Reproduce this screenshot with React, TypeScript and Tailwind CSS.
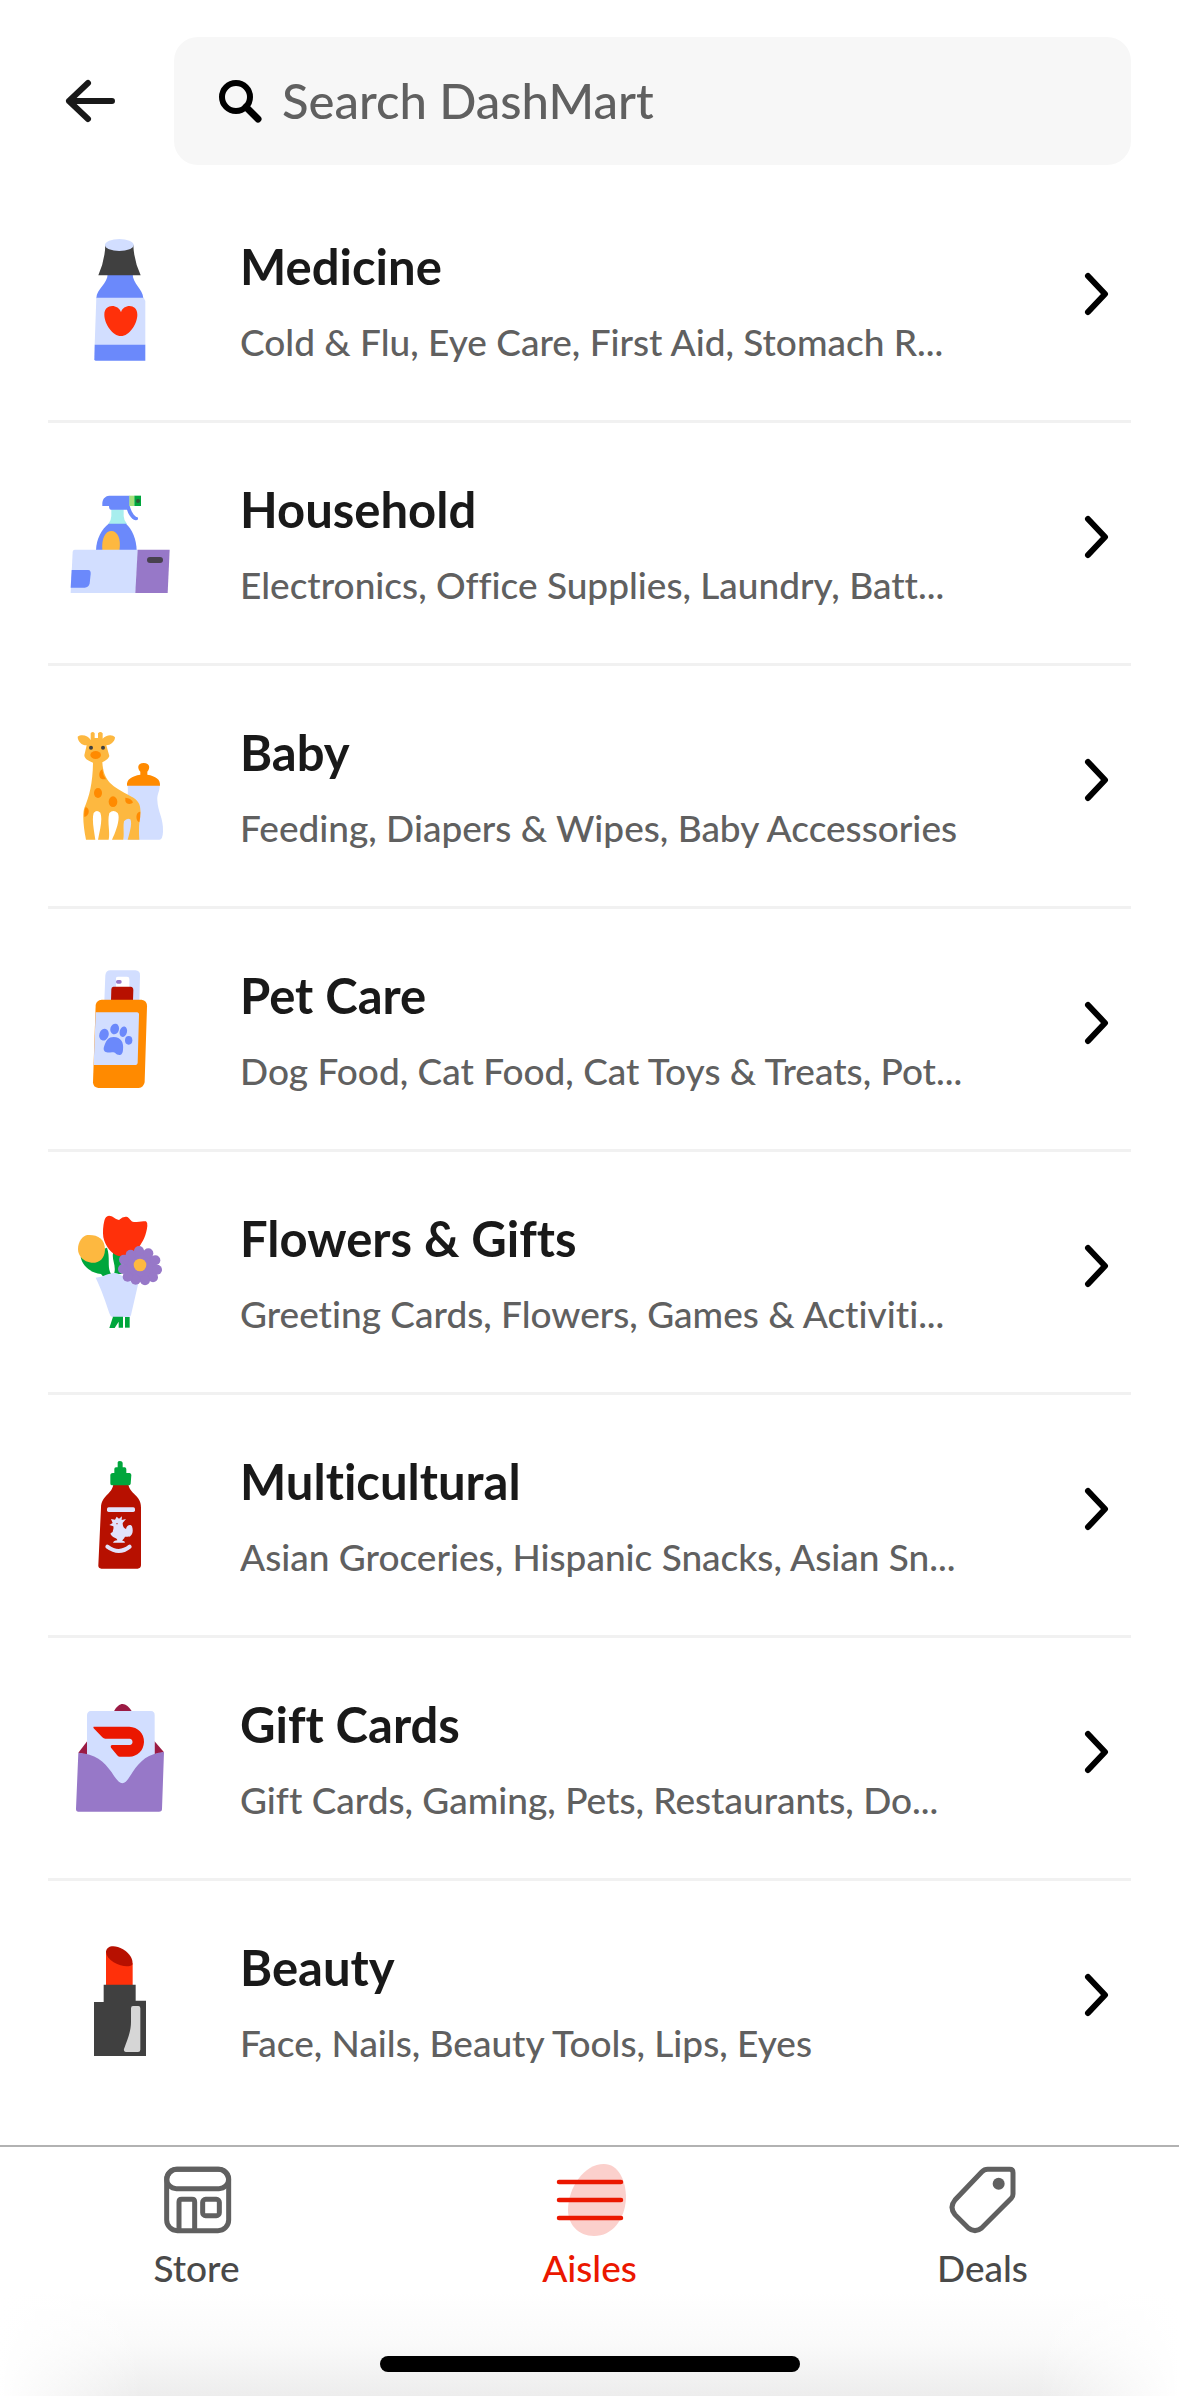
import type { ReactNode } from "react";

type Aisle = {
  name: string;
  description: string;
  // top of the artwork's view box
  top: number;
  art: ReactNode;
};

const MedicineArt = () => (
  <>
    <path d="M173 162 H248 C248 192 278 205 280 235 H139 C140 205 173 192 173 162Z" fill="#6b89fb" />
    <path d="M139 233 H281 L286 243 V375 H134Z" fill="#d2deff" />
    <path d="M134 374 H286 V422 H137 Q133 422 133 418Z" fill="#6b89fb" />
    <path d="M166 74 H250 Q251 120 272 166 H145 Q165 120 166 74Z" fill="#404040" />
    <ellipse cx="208" cy="75" rx="43" ry="18" fill="#d2deff" />
    <path
      d="M213 277 C205 252 163 250 163 284 C163 311 188 348 213 348 C238 348 262 311 262 284 C262 250 220 252 213 277Z"
      fill="#ff300a"
    />
  </>
);

const HouseholdArt = () => (
  <>
    <path d="M184 118 H221 V138 Q221 150 231 162 H175 Q184 150 184 138Z" fill="#a8eeee" />
    <path d="M176 161 H228 C246 178 259 205 260 241 H138 C139 205 155 178 176 161Z" fill="#6b89fb" />
    <path d="M157 241 C154 205 166 183 184 183 C203 183 214 207 208 241Z" fill="#fdb840" />
    <path
      d="M178 77 H239 V107 C244 125 252 139 263 142 Q267 151 257 151 C242 147 234 129 231 119 H183 Q177 119 177 108 H157 C156 88 163 79 178 77Z"
      fill="#6b89fb"
    />
    <path d="M238 77 H253 V108 H238Z" fill="#a3e07a" />
    <path d="M253 77 H273 V108 H253Z" fill="#00a63c" />
    <circle cx="264" cy="93" r="6" fill="#2c5a37" />
    <path d="M74 239 H264 L257 369 H62 L68 245 Q69 239 74 239Z" fill="#d2deff" />
    <path d="M263 239 H359 L353 369 H256Z" fill="#9778c8" />
    <path d="M65 300 H115 Q123 301 122 312 L119 340 Q116 353 104 353 H62Z" fill="#6b89fb" />
    <rect x="291" y="261" width="48" height="18" rx="9" fill="#48414f" />
  </>
);

const BabyArt = () => (
  <>
    <path
      d="M233 224 H329 C330 245 321 250 322 271 C323 305 341 325 339 365 Q338 389 328 389 H220 V300 C236 275 234 250 233 224Z"
      fill="#d2deff"
    />
    <path
      d="M231 227 C229 208 245 198 271 194 V185 C262 176 261 159 281 159 C301 159 301 176 292 185 V194 C317 198 332 208 330 227Z"
      fill="#ff8a00"
    />
    <path
      d="M122 70 Q128 62 134 70 V84 H144 V70 Q151 62 158 70 V86 C168 74 188 72 195 82 C195 96 180 106 169 106 L178 138 C176 147 164 153 157 157 C160 210 185 226 210 241 C247 264 275 266 271 310 C269 335 265 350 268 389 H233 C240 365 247 340 241 328 Q231 322 222 334 C219 352 223 370 220 389 H186 C198 365 212 325 203 309 Q190 297 178 309 C171 335 181 365 176 389 H144 C151 355 158 327 151 308 Q140 298 131 309 C125 330 132 360 136 389 H108 C100 350 97 312 103 294 C118 258 128 220 129 158 C116 153 104 148 103 136 L110 106 C95 106 83 94 83 80 C94 72 115 76 122 90Z"
      fill="#fdb840"
    />
    <ellipse cx="137" cy="135" rx="16" ry="12" fill="#ff8a00" />
    <circle cx="123" cy="113" r="6" fill="#404040" />
    <circle cx="159" cy="113" r="6" fill="#404040" />
    <path d="M157 178 C144 185 145 207 158 208 H168 Q158 195 157 178Z" fill="#ff8a00" />
    <ellipse cx="144" cy="249" rx="12" ry="15" fill="#ff8a00" />
    <ellipse cx="189" cy="275" rx="13" ry="16" fill="#ff8a00" />
    <path d="M226 263 Q243 264 249 277 C244 284 228 284 226 273Z" fill="#ff8a00" />
    <path d="M107 291 C120 294 120 317 103 321 Q101 302 107 291Z" fill="#ff8a00" />
    <path d="M271 305 C257 303 255 333 268 337 Q272 321 271 305Z" fill="#ff8a00" />
  </>
);

const PetCareArt = () => (
  <>
    <path d="M181 61 H256 Q271 62 270 77 L268 153 H163 L166 76 Q168 61 181 61Z" fill="#d2deff" />
    <path d="M198 83 Q199 80 204 80 H231 Q238 80 238 87 V111 H198Z" fill="#fff" />
    <rect x="198" y="90" width="17" height="11" rx="5" fill="#9778c8" />
    <path d="M190 110 H242 Q250 111 250 120 L249 152 H183 L184 118 Q184 110 190 110Z" fill="#b71000" />
    <path
      d="M155 149 H275 Q291 151 291 169 L284 396 Q281 413 266 414 H145 Q129 412 129 397 L137 165 Q139 151 155 149Z"
      fill="#ff8a00"
    />
    <path d="M137 187 H262 Q268 188 267 195 L263 339 Q262 345 257 345 H131Z" fill="#d2deff" />
    <ellipse cx="162" cy="254" rx="14" ry="18" transform="rotate(18 162 254)" fill="#6b89fb" />
    <ellipse cx="194" cy="237" rx="13" ry="16" transform="rotate(16 194 237)" fill="#6b89fb" />
    <ellipse cx="220" cy="245" rx="11" ry="16" transform="rotate(14 220 245)" fill="#6b89fb" />
    <ellipse cx="236" cy="271" rx="11" ry="13" fill="#6b89fb" />
    <path
      d="M191 261 C213 261 222 278 219 299 C218 320 203 317 195 308 C183 304 180 309 170 307 C161 304 159 297 163 287 C169 270 175 261 191 261Z"
      fill="#6b89fb"
    />
  </>
);

const petals = [
  [267, 153], [295, 160], [316, 181], [321, 209], [309, 232],
  [285, 241], [257, 239], [233, 230], [219, 207], [222, 179], [242, 164],
];

const FlowersArt = () => (
  <>
    <path d="M92 172 C97 194 116 218 153 222 L160 230 L183 222 C170 200 182 175 171 143Z" fill="#00a63c" />
    <path d="M186 145 H215 V222 H192 C200 198 185 180 189 160Z" fill="#00a63c" />
    <path d="M190 165 H210 V180 H194Z" fill="#00a63c" />
    <path d="M84 147 C84 125 98 107 112 105 C142 103 165 116 165 149 C164 178 145 190 124 188 C101 185 84 169 84 147Z" fill="#fdb840" />
    <path
      d="M163 62 Q166 48 177 47 C188 47 194 57 207 60 Q218 49 229 50 C239 51 241 65 252 66 C267 66 275 62 288 64 Q293 68 292 78 C289 105 279 125 266 142 C252 159 234 169 206 168 C187 164 166 141 160 112 C158 95 159 78 163 62Z"
      fill="#ff300a"
    />
    <path
      d="M137 233 C160 231 177 218 195 219 C214 220 240 250 265 250 L243 345 Q242 351 236 351 H187 Q180 348 178 340 C168 308 154 268 137 233Z"
      fill="#d2deff"
    />
    <g fill="#9778c8">
      <circle cx="269" cy="197" r="48" />
      {petals.map(([x, y]) => (
        <circle key={`${x}-${y}`} cx={x} cy={y} r="15" />
      ))}
    </g>
    <circle cx="270" cy="195" r="19" fill="#fdb840" />
    <path d="M189 350 H219 V383 H206 L206 365 L194 384 H178Z" fill="#00a63c" />
    <path d="M225 351 H239 V383 H225Z" fill="#00a63c" />
  </>
);

const MulticulturalArt = () => (
  <>
    <path
      d="M190 133 H235 C239 163 273 165 273 203 V376 Q272 386 263 386 H154 Q144 385 145 376 L153 203 C154 166 187 163 190 133Z"
      fill="#b71000"
    />
    <path
      d="M203 67 Q204 63 210 63 Q217 63 218 68 V82 H225 Q229 83 229 88 V99 H239 Q244 100 244 105 L242 131 Q241 136 236 136 H185 Q180 135 181 130 V104 Q182 99 188 99 H193 V87 Q193 82 198 82 H203Z"
      fill="#00a63c"
    />
    <rect x="171" y="202" width="84" height="14" rx="5" fill="#e1e2fb" />
    <path
      d="M178 255 L188 249 L183 237 L195 239 L200 230 L207 236 L216 229 L215 240 L228 237 L218 249 C218 258 221 265 228 267 C230 255 242 251 246 259 C251 274 247 285 239 290 C235 288 230 292 225 290 C222 297 217 298 217 302 Q225 302 225 308 H189 Q191 302 202 301 C202 294 188 294 182 283 Q179 280 188 276 C188 271 192 266 190 259Z"
      fill="#e1e2fb"
    />
    <circle cx="201" cy="251" r="2" fill="#b71000" />
    <path d="M172 320 Q207 346 239 320" stroke="#e1e2fb" strokeWidth="12" strokeLinecap="round" fill="none" />
  </>
);

const GiftCardsArt = () => (
  <>
    <path d="M191 65 C199 50 209 42 218 42 C227 42 238 51 246 65Z" fill="#9b1b44" />
    <path d="M112 153 L85 188 L112 195Z" fill="#9b1b44" />
    <path d="M313 153 L342 187 L313 193Z" fill="#9b1b44" />
    <path d="M122 63 H303 Q314 64 314 75 V290 H111 V75 Q112 64 122 63Z" fill="#d2deff" />
    <path
      d="M131 110 H238 C263 111 283 130 282 156 C281 182 262 200 238 200 H209 Q204 200 201 195 L183 173 Q180 166 187 165 H239 C251 164 250 147 239 146 H166 Q161 146 157 142 L131 115 Q129 111 131 110Z"
      fill="#eb1700"
    />
    <path
      d="M85 188 C135 191 162 214 185 247 C196 264 206 279 217 280 C229 279 237 263 248 246 C270 213 295 190 342 186 L336 357 Q336 365 327 365 H84 Q77 364 78 356Z"
      fill="#9778c8"
    />
  </>
);

const BeautyArt = () => (
  <>
    <path d="M168 62 L248 100 V165 H168Z" fill="#ff300a" />
    <path d="M168 66 C169 47 194 43 219 58 C242 72 250 90 247 104 C236 113 213 109 191 97 C177 88 169 77 168 66Z" fill="#b71000" />
    <path d="M161 164 H257 V212 H288 V378 H132 V216 H161Z" fill="#404040" />
    <path
      d="M249 228 H265 Q271 228 271 235 V359 Q271 366 264 366 H227 Q220 365 222 357 C234 325 243 303 243 275 V235 Q243 228 249 228Z"
      fill="#d6d6d6"
    />
  </>
);

const aisles: Aisle[] = [
  { name: "Medicine", description: "Cold & Flu, Eye Care, First Aid, Stomach R...", top: 0, art: <MedicineArt /> },
  { name: "Household", description: "Electronics, Office Supplies, Laundry, Batt...", top: -21, art: <HouseholdArt /> },
  { name: "Baby", description: "Feeding, Diapers & Wipes, Baby Accessories", top: -12, art: <BabyArt /> },
  { name: "Pet Care", description: "Dog Food, Cat Food, Cat Toys & Treats, Pot...", top: -3, art: <PetCareArt /> },
  { name: "Flowers & Gifts", description: "Greeting Cards, Flowers, Games & Activiti...", top: -24, art: <FlowersArt /> },
  { name: "Multicultural", description: "Asian Groceries, Hispanic Snacks, Asian Sn...", top: -15, art: <MulticulturalArt /> },
  { name: "Gift Cards", description: "Gift Cards, Gaming, Pets, Restaurants, Do...", top: -36, art: <GiftCardsArt /> },
  { name: "Beauty", description: "Face, Nails, Beauty Tools, Lips, Eyes", top: -27, art: <BeautyArt /> },
];

const StoreIcon = () => (
  <svg viewBox="30 42 216 216" className="size-18" fill="none" stroke="#606060" strokeWidth="15" aria-hidden="true">
    <rect x="47" y="58" width="186" height="184" rx="32" />
    <rect x="47" y="58" width="186" height="58" rx="29" />
    <path d="M84 243 V156 Q84 148 92 148 H123 Q131 148 131 156 V243" />
    <rect x="155" y="148" width="50" height="49" rx="9" />
  </svg>
);

const AislesIcon = () => (
  <svg viewBox="0 0 72 72" className="size-18" aria-hidden="true">
    <path d="M50 0 C64 0 72 16 72 34 C71 56 58 72 40 72 C24 72 14 60 14 46 C14 24 30 0 50 0Z" fill="#fbd0cc" />
    <path d="M5 18 H67 M5 36 H67 M5 54 H67" stroke="#eb1700" strokeWidth="4.5" strokeLinecap="round" />
  </svg>
);

const DealsIcon = () => (
  <svg viewBox="48 42 216 216" className="size-18" fill="none" stroke="#606060" strokeWidth="15" aria-hidden="true">
    <path d="M170 58 H236 Q246 58 246 68 V132 Q246 140 241 145 L152 234 Q132 250 112 234 L72 194 Q54 172 72 150 L152 66 Q160 58 170 58Z" />
    <circle cx="203" cy="101" r="18" fill="#606060" stroke="none" />
  </svg>
);

const tabs = [
  { label: "Store", icon: <StoreIcon />, active: false },
  { label: "Aisles", icon: <AislesIcon />, active: true },
  { label: "Deals", icon: <DealsIcon />, active: false },
];

const SearchHeader = () => (
  <header className="flex items-center gap-10 px-12 pt-[37px] pb-[15px]">
    <button type="button" aria-label="Back" className="p-4">
      <svg viewBox="0 0 54 54" className="size-[54px]" fill="none" stroke="#191919" strokeWidth="6" strokeLinecap="round" strokeLinejoin="round">
        <path d="M24 9 L5 27 L24 45 M5 27 H48" />
      </svg>
    </button>
    <label className="flex h-32 flex-1 items-center gap-5 rounded-3xl bg-[#f7f7f7] px-10">
      <svg viewBox="-2 0 48 48" className="size-12 shrink-0" fill="none" stroke="#000" aria-hidden="true">
        <circle cx="20" cy="20" r="14" strokeWidth="6" />
        <path d="M30 30 L42 42" strokeWidth="7" strokeLinecap="round" />
      </svg>
      <input
        type="search"
        aria-label="Search DashMart"
        placeholder="Search DashMart"
        className="w-full bg-transparent text-[49px] font-medium outline-none placeholder:text-[#606060]"
      />
    </label>
  </header>
);

const AisleRow = ({ aisle }: { aisle: Aisle }) => (
  <li className="border-b-3 border-[#f1f1f1] last:border-b-0">
    <a href="#" className="flex h-60 items-center gap-12">
      <svg viewBox={`-6 ${aisle.top} 432 480`} className="h-40 w-36 shrink-0" aria-hidden="true">
        {aisle.art}
      </svg>
      <div className="flex min-w-0 flex-1 flex-col gap-5">
        <h2 className="text-[49px] leading-[64px] font-bold text-[#191919]">{aisle.name}</h2>
        <p className="truncate text-[37px] leading-[48px] font-medium text-[#606060]">{aisle.description}</p>
      </div>
      <svg viewBox="0 0 48 48" className="mb-3 size-12 shrink-0" fill="none" stroke="#000" strokeWidth="6" strokeLinecap="round" strokeLinejoin="round" aria-hidden="true">
        <path d="M5 6 L22 24 L5 42" />
      </svg>
    </a>
  </li>
);

const App = () => {
  return (
    <div className="flex min-h-screen flex-col bg-white font-['Lato',sans-serif] [font-variant-ligatures:none]">
      <SearchHeader />

      <main className="flex-1 px-12">
        <ul>
          {aisles.map((aisle) => (
            <AisleRow key={aisle.name} aisle={aisle} />
          ))}
        </ul>
      </main>

      {/* Bottom tabs */}
      <footer className="border-t-2 border-[#b2b2b2]">
        <nav className="grid grid-cols-3 pt-[17px]">
          {tabs.map((tab) => (
            <a key={tab.label} href="#" className="flex flex-col items-center gap-2">
              {tab.icon}
              <span
                className={
                  tab.active
                    ? "text-[37px] leading-[48px] font-medium text-[#eb1700]"
                    : "text-[37px] leading-[48px] font-medium text-[#494949]"
                }
              >
                {tab.label}
              </span>
            </a>
          ))}
        </nav>
        {/* Home indicator */}
        <div className="flex justify-center bg-[linear-gradient(to_right,white,transparent_12%,transparent_88%,white),linear-gradient(to_bottom,white,#fafafa_50%,#ededed)] pt-16 pb-6">
          <div className="h-4 w-[420px] rounded-full bg-black" />
        </div>
      </footer>
    </div>
  );
};

export default App;
